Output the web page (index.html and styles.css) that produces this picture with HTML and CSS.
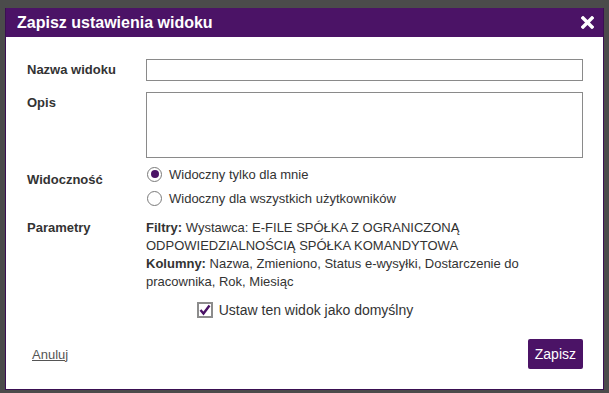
FILE: index.html
```html
<!DOCTYPE html>
<html lang="pl">
<head>
    <meta charset="UTF-8">
    <title>Zapisz ustawienia widoku</title>
    <link rel="stylesheet" href="styles.css">
</head>
<body>
    <div class="dialog">
        <div class="dialog-header">
            <h2>Zapisz ustawienia widoku</h2>
            <button class="close" type="button" aria-label="Zamknij">
                <svg width="13" height="13" viewBox="0 0 13 13"><path d="M2 2 L11 11 M11 2 L2 11" stroke="#fff" stroke-width="3.4" stroke-linecap="square"/></svg>
            </button>
        </div>
        <form class="dialog-body">
            <div class="form-row">
                <label class="field-label" for="name">Nazwa widoku</label>
                <input class="text-input" type="text" id="name">
            </div>
            <div class="form-row desc-row">
                <label class="field-label" for="desc">Opis</label>
                <textarea class="text-input area" id="desc"></textarea>
            </div>
            <div class="form-row visibility">
                <span class="field-label">Widoczność</span>
                <div class="radios">
                    <label class="radio"><span class="dot checked"></span>Widoczny tylko dla mnie</label>
                    <label class="radio"><span class="dot"></span>Widoczny dla wszystkich użytkowników</label>
                </div>
            </div>
            <div class="form-row params">
                <span class="field-label">Parametry</span>
                <div class="params-text">
                    <b>Filtry:</b> Wystawca: E-FILE SPÓŁKA Z OGRANICZONĄ ODPOWIEDZIALNOŚCIĄ SPÓŁKA KOMANDYTOWA<br>
                    <b>Kolumny:</b> Nazwa, Zmieniono, Status e-wysyłki, Dostarczenie do pracownika, Rok, Miesiąc
                </div>
            </div>
            <label class="default-check">
                <span class="box"><svg width="12" height="12" viewBox="0 0 12 12"><path d="M1.5 6 L4.5 9.5 L10.5 1.5" fill="none" stroke="#4a1266" stroke-width="2.4"/></svg></span>
                Ustaw ten widok jako domyślny
            </label>
            <div class="dialog-footer">
                <a href="#" class="cancel">Anuluj</a>
                <button type="button" class="save">Zapisz</button>
            </div>
        </form>
    </div>
</body>
</html>
```

FILE: styles.css
```css
body {
    margin: 0;
    background-color: #4b4b4b;
    font-family: "Liberation Sans", Arial, sans-serif;
    color: #333;
    height: 393px;
    overflow: hidden;
}
.dialog {
    margin: 8px 5px 0 5px;
    width: 597px;
    border: 1px solid #3a0f52;
    border-top: none;
    background-color: #fff;
}
.dialog-header {
    background-color: #4b1366;
    height: 29px;
    display: flex;
    align-items: center;
    justify-content: space-between;
    padding: 0 9px 0 11px;
}
.dialog-header h2 {
    margin: 0;
    color: #fff;
    font-size: 16px;
    font-weight: bold;
}
.close {
    background: none;
    border: none;
    padding: 0;
    width: 13px;
    height: 13px;
    display: flex;
    cursor: pointer;
}
.dialog-body {
    padding: 22px 20px 20px 21px;
}
.form-row {
    display: grid;
    grid-template-columns: 119px 1fr;
    margin-bottom: 11px;
}
.form-row.desc-row {
    margin-bottom: 4px;
}
.field-label {
    font-size: 13px;
    font-weight: bold;
    line-height: 22px;
    color: #333;
}
.text-input {
    box-sizing: border-box;
    width: 100%;
    height: 22px;
    border: 1px solid #8a8a8a;
    padding: 2px 4px;
    font-family: inherit;
    font-size: 13px;
    margin: 0;
}
.area {
    height: 66px;
    resize: none;
    display: block;
}
.visibility {
    margin-bottom: 0;
}
.visibility .field-label {
    line-height: 24px;
    padding-top: 6px;
}
.radios {
    display: flex;
    flex-direction: column;
}
.radio {
    display: flex;
    align-items: center;
    font-size: 13px;
    height: 24px;
}
.dot {
    box-sizing: border-box;
    width: 15px;
    height: 15px;
    border: 1px solid #7a7a7a;
    border-radius: 50%;
    margin: 0 7px 0 1px;
    display: flex;
    align-items: center;
    justify-content: center;
}
.dot.checked::after {
    content: "";
    width: 8px;
    height: 8px;
    border-radius: 50%;
    background-color: #4b1366;
}
.params {
    margin-top: 9px;
    margin-bottom: 0;
}
.params .field-label {
    line-height: 18px;
}
.params-text {
    font-size: 13px;
    line-height: 18px;
}
.default-check {
    display: flex;
    align-items: center;
    justify-content: center;
    font-size: 14px;
    height: 24px;
    margin-top: 7px;
}
.box {
    box-sizing: border-box;
    width: 16px;
    height: 16px;
    border: 2px solid #8c8c8c;
    margin-right: 6px;
    display: flex;
    align-items: center;
    justify-content: center;
}
.dialog-footer {
    display: flex;
    justify-content: space-between;
    align-items: center;
    margin-top: 17px;
    padding-left: 5px;
}
.cancel {
    color: #555;
    font-size: 13px;
    text-decoration: underline;
}
.save {
    background-color: #4b1366;
    color: #fff;
    border: none;
    border-radius: 2px;
    height: 30px;
    padding: 0 7px;
    font-family: inherit;
    font-size: 14px;
    cursor: pointer;
}
```
